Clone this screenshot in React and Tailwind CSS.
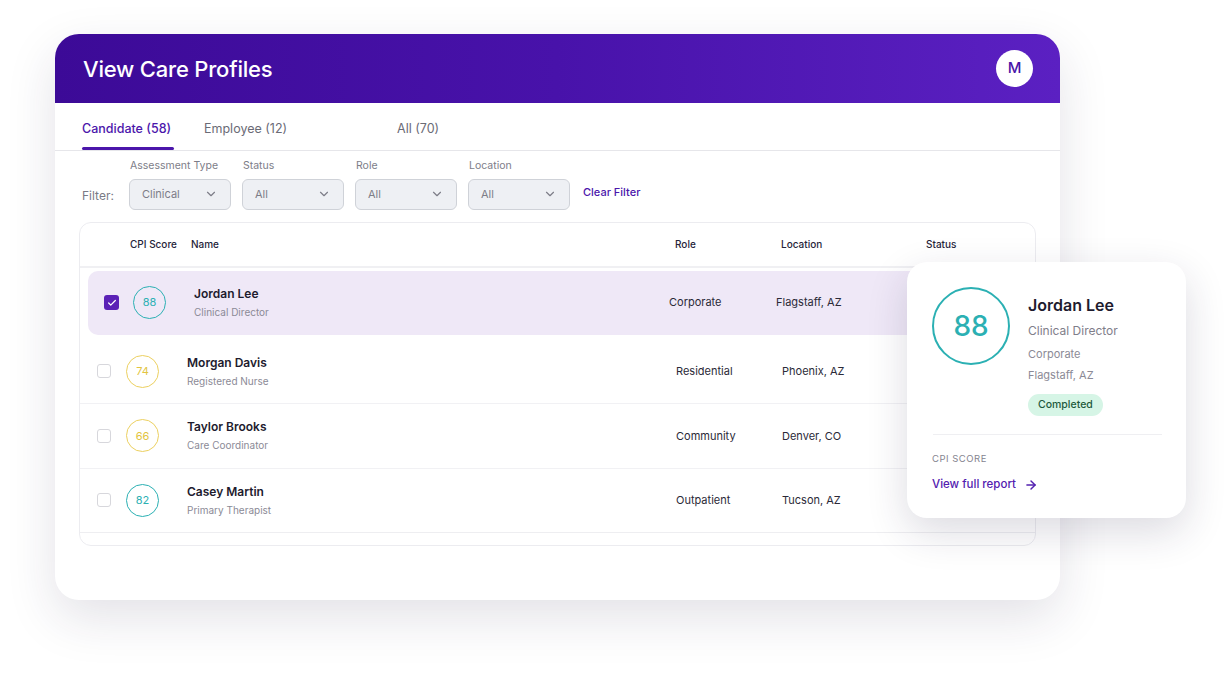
import React from 'react';
import { ChevronDown, Check, ArrowRight } from 'lucide-react';

const rows = [
  { name: 'Jordan Lee', title: 'Clinical Director', score: 88, tone: 'teal', role: 'Corporate', location: 'Flagstaff, AZ', selected: true },
  { name: 'Morgan Davis', title: 'Registered Nurse', score: 74, tone: 'yellow', role: 'Residential', location: 'Phoenix, AZ' },
  { name: 'Taylor Brooks', title: 'Care Coordinator', score: 66, tone: 'yellow', role: 'Community', location: 'Denver, CO' },
  { name: 'Casey Martin', title: 'Primary Therapist', score: 82, tone: 'teal', role: 'Outpatient', location: 'Tucson, AZ' },
];

const filters = [
  { label: 'Assessment Type', value: 'Clinical' },
  { label: 'Status', value: 'All' },
  { label: 'Role', value: 'All' },
  { label: 'Location', value: 'All' },
];

function Score({ value, tone }) {
  const cls = tone === 'teal' ? 'border-[#2bb0b3] text-[#2bb0b3]' : 'border-[#ecd060] text-[#e2c441]';
  return (
    <div className={`w-[33px] h-[33px] rounded-full border-[1.5px] flex items-center justify-center text-[11px] ${cls}`}>
      {value}
    </div>
  );
}

function Row({ row, last }) {
  if (row.selected) {
    return (
      <div className="mx-[8px] mt-[3px] mb-[5px] h-[64px] rounded-[10px] bg-[#efe8f7] flex items-center">
        <div className="w-[16px]" />
        <div className="w-[15px] h-[15px] rounded-[3px] bg-[#5b21b6] flex items-center justify-center">
          <Check size={10} strokeWidth={3} className="text-white" />
        </div>
        <div className="w-[14px]" />
        <Score value={row.score} tone={row.tone} />
        <div className="w-[28px]" />
        <div className="w-[475px]">
          <div className="text-[12px] font-semibold text-[#1e1b2e] leading-none">{row.name}</div>
          <div className="text-[10px] text-[#8b8a96] mt-[7px] leading-none">{row.title}</div>
        </div>
        <div className="w-[107px] text-[11px] text-[#2b2a38]">{row.role}</div>
        <div className="text-[11px] text-[#2b2a38]">{row.location}</div>
      </div>
    );
  }
  return (
    <div className={`h-[64.5px] flex items-center ${last ? 'border-b border-[#eeeef1]' : 'border-b border-[#f1f1f4]'}`}>
      <div className="w-[17px]" />
      <div className="w-[14px] h-[14px] rounded-[3px] border-[1.5px] border-[#d7d7dc]" />
      <div className="w-[15px]" />
      <Score value={row.score} tone={row.tone} />
      <div className="w-[28px]" />
      <div className="w-[489px]">
        <div className="text-[12px] font-semibold text-[#1e1b2e] leading-none">{row.name}</div>
        <div className="text-[10px] text-[#8b8a96] mt-[7px] leading-none">{row.title}</div>
      </div>
      <div className="w-[106px] text-[11px] text-[#2b2a38]">{row.role}</div>
      <div className="text-[11px] text-[#2b2a38]">{row.location}</div>
    </div>
  );
}

export default function App() {
  return (
    <div className="relative w-[1225px] h-[675px] bg-white overflow-hidden pl-[55px] pt-[34px]" style={{ fontFamily: 'Inter, Lato, sans-serif' }}>
      <div className="w-[1005px] h-[566px] rounded-[24px] bg-white overflow-hidden shadow-[0_18px_50px_rgba(40,30,70,0.13)] flex flex-col">
        {/* header */}
        <div className="h-[69px] shrink-0 bg-linear-to-r from-[#3c0a97] via-[#4812aa] to-[#5b20c2] flex items-center justify-between pl-[28px] pr-[27px]">
          <h1 className="text-white text-[22px] font-medium tracking-[-0.2px] mt-[1px]">View Care Profiles</h1>
          <div className="w-[37px] h-[37px] rounded-full bg-white flex items-center justify-center text-[#4a14a8] text-[15px] font-medium">M</div>
        </div>

        {/* tabs */}
        <div className="h-[48px] shrink-0 border-b border-[#e6e6ea] flex items-end pl-[27px]">
          <div className="flex flex-col items-start">
            <span className="text-[12.5px] text-[#4b16ab] font-medium leading-none">Candidate (58)</span>
            <div className="mt-[12px] h-[3px] w-[92px] rounded-full bg-[#4b16ab]" />
          </div>
          <span className="ml-[30px] mb-[15px] text-[12.5px] text-[#6b6b76] leading-none">Employee (12)</span>
          <span className="ml-[110px] mb-[15px] text-[12.5px] text-[#6b6b76] leading-none">All (70)</span>
        </div>

        {/* filters */}
        <div className="flex items-end pl-[27px] pt-[10px]">
          <span className="w-[47px] text-[12px] text-[#7a7a85] mb-[5px]">Filter:</span>
          <div className="flex items-end gap-[11px]">
            {filters.map((f) => (
              <div key={f.label} className="flex flex-col">
                <span className="text-[10.5px] text-[#7d7d88] mb-[7px] pl-[1px] leading-none">{f.label}</span>
                <div className="w-[102px] h-[31px] rounded-[6px] bg-[#eef0f4] border border-[#cfd2d8] flex items-center justify-between pl-[12px] pr-[12px]">
                  <span className="text-[11px] text-[#7d7d88]">{f.value}</span>
                  <ChevronDown size={14} className="text-[#7d7d88]" />
                </div>
              </div>
            ))}
          </div>
          <span className="ml-[13px] mb-[9px] text-[11px] font-medium text-[#4b16ab]">Clear Filter</span>
        </div>

        {/* table */}
        <div className="ml-[24px] mt-[12px] w-[957px] h-[324px] rounded-[12px] border border-[#ececf0] flex flex-col">
          <div className="h-[45px] shrink-0 flex items-center border-b-2 border-[#f0f0f3] text-[10px] font-medium text-[#26243a]">
            <span className="ml-[50px] w-[61px]">CPI Score</span>
            <span className="w-[484px]">Name</span>
            <span className="w-[106px]">Role</span>
            <span className="w-[145px]">Location</span>
            <span>Status</span>
          </div>
          {rows.map((r, i) => (
            <Row key={r.name} row={r} last={i === rows.length - 1} />
          ))}
        </div>
      </div>

      {/* detail popover */}
      <div className="absolute left-[907px] top-[262px] w-[279px] h-[256px] rounded-[20px] bg-white shadow-[0_14px_40px_rgba(40,30,70,0.16)] pt-[25px] px-[25px]">
        <div className="flex items-start">
          <div className="w-[78px] h-[78px] shrink-0 rounded-full border-[2.5px] border-[#2bb0b3] flex items-center justify-center text-[28px] text-[#2bb0b3] font-medium">
            88
          </div>
          <div className="ml-[18px] pt-[10px]">
            <div className="text-[16px] font-semibold text-[#1e1b2e] leading-none">Jordan Lee</div>
            <div className="mt-[12px] text-[12px] text-[#7f7e8a] leading-none">Clinical Director</div>
            <div className="mt-[12px] text-[11px] text-[#8b8a96] leading-none">Corporate</div>
            <div className="mt-[10px] text-[11px] text-[#8b8a96] leading-none">Flagstaff, AZ</div>
            <div className="mt-[13px] inline-flex items-center h-[22px] px-[10px] rounded-full bg-[#d6f5e6] text-[10.5px] text-[#1e5a3d] font-medium">Completed</div>
          </div>
        </div>
        <div className="mt-[18px] border-t border-[#efeff2] mr-[-1px] ml-[1px]" />
        <div className="mt-[19px] text-[9.5px] tracking-[0.5px] text-[#85848f] leading-none">CPI SCORE</div>
        <div className="mt-[14px] flex items-center gap-[8px] text-[11.5px] font-medium text-[#5320b0] leading-none">
          View full report
          <ArrowRight size={14} strokeWidth={2.5} />
        </div>
      </div>
    </div>
  );
}
